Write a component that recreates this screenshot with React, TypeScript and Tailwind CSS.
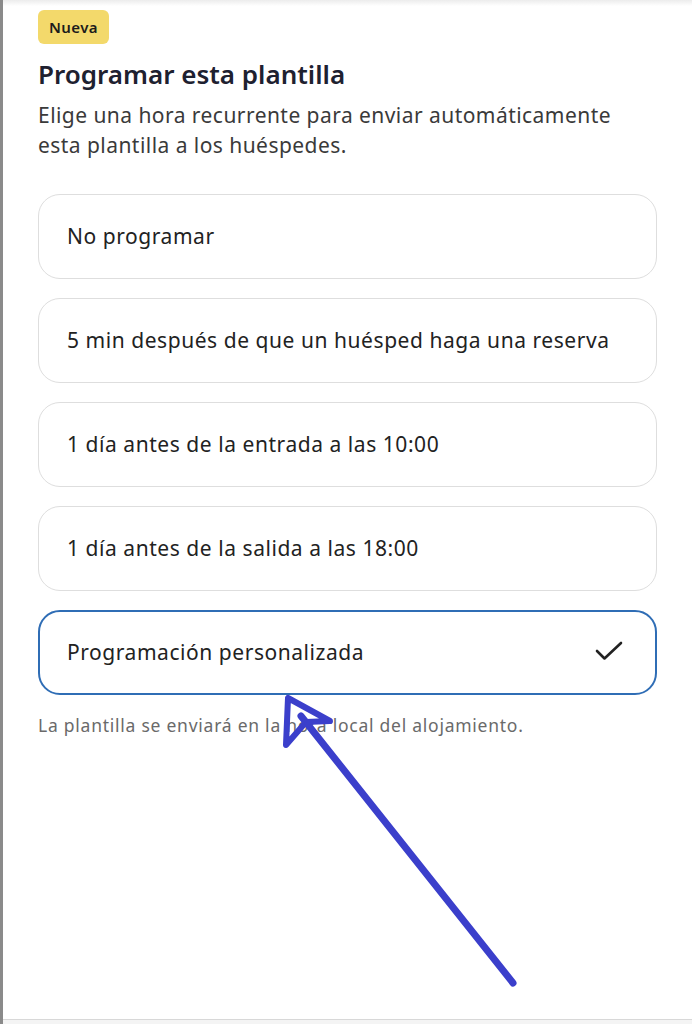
const options = [
  "No programar",
  "5 min después de que un huésped haga una reserva",
  "1 día antes de la entrada a las 10:00",
  "1 día antes de la salida a las 18:00",
];

function Check() {
  return (
    <svg width="30" height="24" viewBox="0 0 30 24" fill="none">
      <path
        d="M2 10L9.5 17.5L26 2"
        stroke="#222222"
        strokeWidth="2.6"
        strokeLinecap="round"
        strokeLinejoin="round"
      />
    </svg>
  );
}

function Arrow() {
  return (
    <svg
      className="absolute left-0 top-0 pointer-events-none"
      width="692"
      height="1024"
      viewBox="0 0 692 1024"
      fill="none"
    >
      <path
        d="M513 983L301 716"
        stroke="#3b3fcb"
        strokeWidth="7"
        strokeLinecap="round"
      />
      <path
        d="M288 698L286 745L306 722L330 721Z"
        stroke="#3b3fcb"
        strokeWidth="6"
        strokeLinejoin="round"
      />
    </svg>
  );
}

export default function App() {
  return (
    <div
      className="relative w-[692px] h-[1024px] overflow-hidden bg-white"
      style={{ fontFamily: "'Noto Sans', 'Open Sans', sans-serif" }}
    >
      <div className="flex h-full">
        {/* left edge of the window behind */}
        <div className="w-[3px] bg-[#8a8a8a] shrink-0" />
        <div className="flex-1 flex flex-col">
          <div className="h-[6px] bg-gradient-to-b from-[#ececec] to-white" />
          <div className="flex-1 flex flex-col pl-[35px] pr-[35px] pt-[4px]">
            <div className="flex">
              <span className="px-[11px] h-[34px] flex items-center rounded-[6px] bg-[#f3d96b] text-[#1c1c1c] text-[15px] font-semibold tracking-[0.4px]">
                Nueva
              </span>
            </div>
            <h1 className="mt-[13px] text-[26px] leading-[34px] font-semibold text-[#1e2130]">
              Programar esta plantilla
            </h1>
            <p className="mt-[9px] text-[21px] leading-[30px] text-[#3a3a3a] tracking-[0.45px]">
              Elige una hora recurrente para enviar automáticamente
              <br />
              esta plantilla a los huéspedes.
            </p>
            <div className="mt-[34px] flex flex-col gap-[19px]">
              {options.map((o) => (
                <div
                  key={o}
                  className="h-[85px] rounded-[22px] border border-[#dedede] flex items-center px-[28px] text-[21px] text-[#222222] tracking-[0.55px]"
                >
                  {o}
                </div>
              ))}
              <div className="h-[85px] rounded-[22px] border-2 border-[#2f6db5] flex items-center justify-between pl-[27px] pr-[30px] text-[21px] text-[#222222] tracking-[0.55px]">
                <span>Programación personalizada</span>
                <Check />
              </div>
            </div>
            <p className="mt-[17px] text-[17.5px] text-[#6a6a6a] tracking-[0.75px]">
              La plantilla se enviará en la hora local del alojamiento.
            </p>
          </div>
          <div className="h-[5px] border-t border-[#d8d8d8] bg-[#f4f4f4]" />
        </div>
      </div>
      <Arrow />
    </div>
  );
}
